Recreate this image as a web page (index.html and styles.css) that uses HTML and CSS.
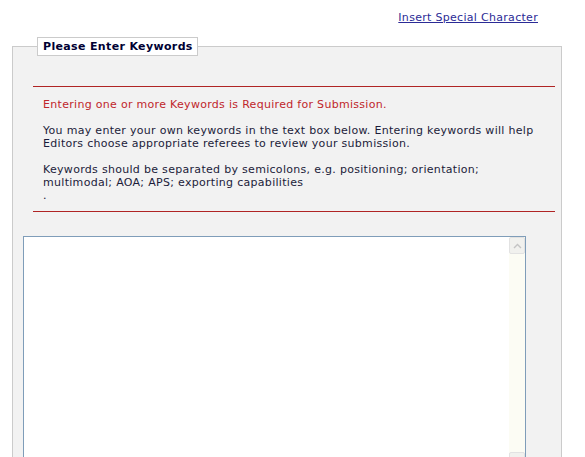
FILE: index.html
```html
<!DOCTYPE html>
<html>
<head>
<meta charset="utf-8">
<title>Keywords</title>
<link rel="stylesheet" href="styles.css">
</head>
<body>
<div class="toplinks">
  <a href="#" class="special-link">Insert Special Character</a>
</div>
<fieldset class="kw-fieldset">
  <legend class="kw-legend">Please Enter Keywords</legend>
  <div class="kw-info">
    <span class="kw-required">Entering one or more Keywords is Required for Submission.</span><br><br>
    You may enter your own keywords in the text box below. Entering keywords will help Editors choose appropriate referees to review your submission.<br><br>
    Keywords should be separated by semicolons, e.g. positioning; orientation; multimodal; AOA; APS; exporting capabilities<br>.
  </div>
  <div class="kw-box">
    <textarea class="kw-textarea"></textarea>
    <div class="fake-scroll">
      <div class="sb-btn">
        <svg width="9" height="6" viewBox="0 0 9 6"><path d="M1 5 L4.5 1.5 L8 5" fill="none" stroke="#c4c4c4" stroke-width="1.4"/></svg>
      </div>
      <div class="sb-track"></div>
      <div class="sb-btn">
        <svg width="9" height="6" viewBox="0 0 9 6"><path d="M1 1 L4.5 4.5 L8 1" fill="none" stroke="#c4c4c4" stroke-width="1.4"/></svg>
      </div>
    </div>
  </div>
</fieldset>
</body>
</html>
```
FILE: styles.css
```css
html, body {
  margin: 0;
  padding: 0;
  background: #ffffff;
}
body {
  font-family: "DejaVu Sans", Verdana, sans-serif;
  font-size: 11px;
  line-height: 13px;
  letter-spacing: 0.3px;
  color: #1c1c3a;
}
.toplinks {
  text-align: right;
  padding: 11px 47px 0 0;
  height: 13px;
}
.special-link {
  color: #2b2b96;
  text-decoration: underline;
}
.kw-fieldset {
  margin: 13px 0 0 12px;
  width: 550px;
  box-sizing: border-box;
  padding: 0;
  border: 1px solid #cbcbcb;
  background: #f2f2f2;
  min-width: 0;
}
.kw-legend {
  margin-left: 24px;
  padding: 2px 4px 2px 5px;
  border: 1px solid #cbcbcb;
  background: #ffffff;
  font-weight: bold;
  letter-spacing: 0.35px;
  color: #000033;
  line-height: 13px;
}
.kw-info {
  margin: 30px 6px 0 20px;
  border-top: 1px solid #b02424;
  border-bottom: 1px solid #b02424;
  padding: 11px 10px 9px 10px;
}
.kw-required {
  color: #c0262b;
}
.kw-box {
  display: flex;
  margin: 24px 35px 0 10px;
  height: 232px;
  border: 1px solid #7f9db9;
  background: #ffffff;
}
.kw-textarea {
  flex: 1;
  border: none;
  outline: none;
  resize: none;
  margin: 0;
  padding: 2px;
  background: #ffffff;
  font-family: "DejaVu Sans", Verdana, sans-serif;
  font-size: 11px;
}
.fake-scroll {
  width: 16px;
  display: flex;
  flex-direction: column;
  background: #fcfcf4;
}
.sb-btn {
  height: 15px;
  border: 1px solid #e2e2e2;
  border-radius: 2px;
  background: #f1f1ee;
  display: flex;
  align-items: center;
  justify-content: center;
}
.sb-track {
  flex: 1;
}
```
